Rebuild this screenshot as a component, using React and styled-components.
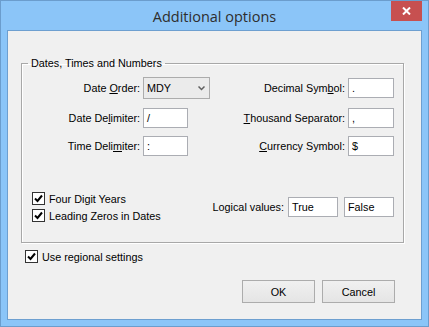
import styled, { createGlobalStyle } from 'styled-components';

const Global = createGlobalStyle`
  html, body { margin: 0; padding: 0; background: #8bc5f8; }
  * { box-sizing: border-box; }
`;

const Window = styled.div`
  width: 429px;
  height: 327px;
  display: flex;
  flex-direction: column;
  background: #8bc5f8;
  border: 1px solid #6b9dcd;
  padding: 0 6px 6px 6px;
  font-family: "Liberation Sans", Arial, sans-serif;
  font-size: 10.8px;
  color: #000;
  overflow: hidden;
`;

const TitleBar = styled.div`
  height: 29px;
  display: grid;
  grid-template-columns: 1fr auto 1fr;
  align-items: center;
`;

const Title = styled.div`
  grid-column: 2;
  font-family: "Open Sans", "Noto Sans", sans-serif;
  font-size: 14.5px;
  color: #2e2e2e;
  padding-top: 1px;
`;

const CloseButton = styled.div`
  grid-column: 3;
  justify-self: end;
  align-self: start;
  width: 31px;
  height: 20px;
  background: #c75050;
  display: flex;
  align-items: center;
  justify-content: center;
`;

const Client = styled.div`
  flex: 1;
  display: flex;
  flex-direction: column;
  background: #f0f0f0;
  border: 1px solid #6d9fd0;
`;

const Group = styled.fieldset`
  margin: 26px 17px 0 13px;
  padding: 7px 9px 18px 6px;
  border: 1px solid #a8a8a8;
  box-shadow: inset 1px 1px 0 #fff, 1px 1px 0 #fff;
  min-width: 0;
`;

const Legend = styled.legend`
  padding: 0 3px;
  line-height: 13px;
`;

const FieldGrid = styled.div`
  display: grid;
  grid-template-columns: 112px 67px 1fr auto 46px;
  grid-template-rows: 22px 20px 20px;
  column-gap: 3px;
  row-gap: 8.5px;
  align-items: center;
`;

const Label = styled.label`
  text-align: right;
  white-space: nowrap;
  grid-column: ${({ col }) => col};
`;

const TextBox = styled.div`
  width: ${({ w }) => w || 45}px;
  height: 20px;
  background: #fff;
  border: 1px solid #abadb3;
  padding: 0 3px;
  line-height: 18px;
  grid-column: ${({ col }) => col || 'auto'};
`;

const Combo = styled.div`
  width: 67px;
  height: 22px;
  background: #ebebeb;
  border: 1px solid #acacac;
  display: flex;
  align-items: center;
  justify-content: space-between;
  padding: 0 4px 0 3px;
  color: #000;
`;

const BottomRow = styled.div`
  display: flex;
  align-items: center;
  margin-top: 34px;
  padding-left: 4px;
`;

const CheckColumn = styled.div`
  display: flex;
  flex-direction: column;
`;

const CheckRow = styled.div`
  display: flex;
  align-items: center;
  gap: 4px;
  height: 17px;
  white-space: nowrap;
`;

const Box = styled.span`
  width: 13px;
  height: 13px;
  border: 1px solid #333;
  background: #fff;
  display: flex;
  align-items: center;
  justify-content: center;
`;

const Spacer = styled.div`
  flex: 1;
`;

const LogicalLabel = styled.span`
  margin-right: 4px;
`;

const Gap = styled.div`
  width: 6px;
`;

const Outside = styled.div`
  margin: 5px 0 0 17px;
`;

const ButtonRow = styled.div`
  margin-top: auto;
  display: flex;
  justify-content: flex-end;
  gap: 7px;
  padding: 0 26px 16px 0;
`;

const Button = styled.div`
  width: 73px;
  height: 23px;
  border: 1px solid #acacac;
  background: linear-gradient(#f0f0f0, #e5e5e5);
  display: flex;
  align-items: center;
  justify-content: center;
`;

const Check = () => (
  <svg width="9" height="9" viewBox="0 0 9 9">
    <path d="M1 4.5 L3.5 7 L8 1.5" fill="none" stroke="#000" strokeWidth="2" />
  </svg>
);

const CheckBox = ({ children }) => (
  <CheckRow>
    <Box>
      <Check />
    </Box>
    <span>{children}</span>
  </CheckRow>
);

export default function App() {
  return (
    <>
      <Global />
      <Window>
        <TitleBar>
          <Title>Additional options</Title>
          <CloseButton>
            <svg width="9" height="8" viewBox="0 0 9 8">
              <path d="M1 0.5 L8 7.5 M8 0.5 L1 7.5" stroke="#fff" strokeWidth="2" />
            </svg>
          </CloseButton>
        </TitleBar>
        <Client>
          <Group>
            <Legend>Dates, Times and Numbers</Legend>
            <FieldGrid>
              <Label col={1}>Date <u>O</u>rder:</Label>
              <Combo>
                <span>MDY</span>
                <svg width="7" height="5" viewBox="0 0 7 5">
                  <path d="M0.5 0.5 L3.5 3.5 L6.5 0.5" fill="none" stroke="#606060" strokeWidth="1.5" />
                </svg>
              </Combo>
              <Label col={4}>Decimal Sym<u>b</u>ol:</Label>
              <TextBox w={46}>.</TextBox>

              <Label col={1}>Date De<u>l</u>imiter:</Label>
              <TextBox col={2}>/</TextBox>
              <Label col={4}><u>T</u>housand Separator:</Label>
              <TextBox w={46}>,</TextBox>

              <Label col={1}>Time Deli<u>m</u>iter:</Label>
              <TextBox col={2}>:</TextBox>
              <Label col={4}><u>C</u>urrency Symbol:</Label>
              <TextBox w={46}>$</TextBox>
            </FieldGrid>
            <BottomRow>
              <CheckColumn>
                <CheckBox>Four Digit Years</CheckBox>
                <CheckBox>Leading Zeros in Dates</CheckBox>
              </CheckColumn>
              <Spacer />
              <LogicalLabel>Logical values:</LogicalLabel>
              <TextBox w={50}>True</TextBox>
              <Gap />
              <TextBox w={50}>False</TextBox>
            </BottomRow>
          </Group>
          <Outside>
            <CheckBox>Use regional settings</CheckBox>
          </Outside>
          <ButtonRow>
            <Button>OK</Button>
            <Button>Cancel</Button>
          </ButtonRow>
        </Client>
      </Window>
    </>
  );
}
